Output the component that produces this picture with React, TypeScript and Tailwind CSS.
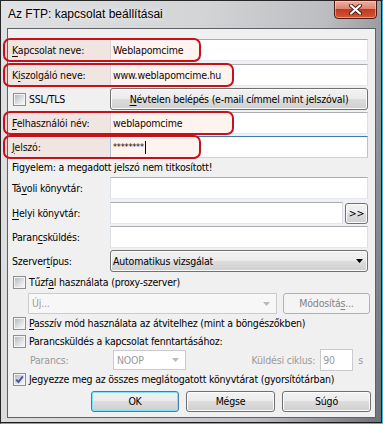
import React from "react";

const font = "font-['DejaVu_Sans_Condensed','DejaVu_Sans',sans-serif] [font-stretch:condensed] text-[10.5px] leading-[13px] tracking-[-0.2px] text-black";

function U({ children }: { children: React.ReactNode }) {
  return <span className="underline decoration-1 underline-offset-[2px]">{children}</span>;
}

function TextBox({ className = "", focused = false, disabled = false, children }: { className?: string; focused?: boolean; disabled?: boolean; children?: React.ReactNode }) {
  const border = focused
    ? "border-[#3d7bad] border-x-[#a4c9e3] border-b-[#b7d9ed]"
    : disabled
      ? "border-[#c9cbce] text-[#8d8d8d]"
      : "border-[#abadb3] border-x-[#dbdfe6] border-b-[#e3e9ef]";
  return <div className={`flex h-[22px] items-center border bg-white px-[2px] ${border} ${className}`}>{children}</div>;
}

function Btn({ className = "", def = false, disabled = false, children }: { className?: string; def?: boolean; disabled?: boolean; children?: React.ReactNode }) {
  const look = def
    ? "border-[#3c7fb1] shadow-[inset_0_0_0_1px_#7ee3fb] bg-[linear-gradient(#f2f2f2_0%,#ebebeb_50%,#dddddd_50%,#cfcfcf_100%)]"
    : disabled
      ? "border-[#adb2b5] bg-[#f4f4f4] text-[#838383]"
      : "border-[#707070] shadow-[inset_0_0_0_1px_#fcfcfc] bg-[linear-gradient(#f2f2f2_0%,#ebebeb_50%,#dddddd_50%,#cfcfcf_100%)]";
  return <div className={`flex items-center justify-center rounded-[3px] border ${look} ${className}`}>{children}</div>;
}

function Arrow({ color = "#000" }: { color?: string }) {
  return (
    <svg width="7" height="4" viewBox="0 0 7 4" className="shrink-0">
      <polygon points="0,0 7,0 3.5,4" fill={color} />
    </svg>
  );
}

function Check({ checked = false }: { checked?: boolean }) {
  return (
    <div className="relative flex h-[13px] w-[13px] shrink-0 items-center justify-center border border-[#8e8f8f] bg-[#f4f4f4]">
      <div className="h-[9px] w-[9px] bg-[linear-gradient(135deg,#b6babf_0%,#e7e8ea_70%,#f7f7f7_100%)]" />
      {checked && (
        <svg width="11" height="11" viewBox="0 0 11 11" className="absolute left-0 top-0">
          <path d="M2.2 5.6 L4.5 8 L8.8 2.4" fill="none" stroke="#3e5c9c" strokeWidth="2" />
        </svg>
      )}
    </div>
  );
}

function RedMark({ className }: { className: string }) {
  return <div className={`absolute h-[24px] rounded-[7px] border-[2.5px] border-[#c8101a] bg-[rgba(255,90,42,0.07)] ${className}`} />;
}

export default function App() {
  return (
    <div className={`relative flex h-[424px] w-[383px] flex-col border border-[#262626] border-r-[#36bfe9] border-b-[#36bfe9] shadow-[inset_-1px_-1px_0_#1c1c1c] bg-[linear-gradient(100deg,#e0e1e3_0%,#d3d4d6_45%,#bcbdc0_72%,#6f7275_100%)] ${font}`}>
      {/* title bar */}
      <div className="flex h-[27px] items-center pl-[7px]">
        <span className="font-['Liberation_Sans',sans-serif] text-[12px] tracking-normal text-black [text-shadow:0_0_6px_#ffffff]">Az FTP: kapcsolat beállításai</span>
      </div>
      <div className="absolute right-[5px] top-[-1px] flex h-[19px] w-[43px] items-center justify-center rounded-b-[4px] border border-[#4d1a12] bg-[linear-gradient(#eab0a2_0%,#de8470_45%,#c1391f_50%,#d25636_100%)] shadow-[inset_0_0_0_1px_rgba(255,220,210,0.5)]">
        <svg width="13" height="11" viewBox="0 0 13 11">
          <path d="M2 1.5 L11 9.5 M11 1.5 L2 9.5" stroke="#4a1a12" strokeWidth="4" strokeLinecap="round" />
          <path d="M2 1.5 L11 9.5 M11 1.5 L2 9.5" stroke="#ffffff" strokeWidth="2.2" strokeLinecap="round" />
        </svg>
      </div>

      {/* client */}
      <div className="mx-[6px] flex h-[390px] flex-col border border-[#5d6064] bg-[#f0f0f0]">
        <div className="mt-[10px] flex h-[22px] items-center pl-[4px] pr-[7px]">
          <div className="w-[98px]"><U>K</U>apcsolat neve:</div>
          <TextBox className="flex-1">Weblapomcime</TextBox>
        </div>
        <div className="mt-[3px] flex h-[22px] items-center pl-[4px] pr-[7px]">
          <div className="w-[98px]">K<U>i</U>szolgáló neve:</div>
          <TextBox className="flex-1">www.weblapomcime.hu</TextBox>
        </div>
        <div className="mt-[2px] flex h-[22px] items-center pl-[4px] pr-[7px]">
          <div className="flex w-[98px] items-center gap-[3px] pl-[1px]">
            <Check />
            <span>SSL/TLS</span>
          </div>
          <Btn className="h-[22px] flex-1"><U>N</U>évtelen belépés (e-mail címmel mint jelszóval)</Btn>
        </div>
        <div className="mt-[2px] flex h-[22px] items-center pl-[4px] pr-[7px]">
          <div className="w-[98px]"><U>F</U>elhasználói név:</div>
          <TextBox className="flex-1">weblapomcime</TextBox>
        </div>
        <div className="mt-[2px] flex h-[22px] items-center pl-[4px] pr-[7px]">
          <div className="w-[98px]"><U>J</U>elszó:</div>
          <TextBox focused className="flex-1">
            <span className="text-[9px] leading-[8px]">********</span>
            <span className="ml-[1px] h-[13px] w-[1px] bg-black" />
          </TextBox>
        </div>
        <div className="flex h-[18px] items-center pl-[4px]">Figyelem: a megadott jelszó nem titkosított!</div>
        <div className="mt-[1px] flex h-[22px] items-center pl-[4px] pr-[7px]">
          <div className="w-[98px]">Tá<U>v</U>oli könyvtár:</div>
          <TextBox className="flex-1" />
        </div>
        <div className="mt-[3px] flex h-[22px] items-center pl-[4px] pr-[7px]">
          <div className="w-[98px]"><U>H</U>elyi könyvtár:</div>
          <TextBox className="flex-1" />
          <Btn className="ml-[2px] mt-[1px] h-[21px] w-[23px]">&gt;&gt;</Btn>
        </div>
        <div className="mt-[2px] flex h-[22px] items-center pl-[4px] pr-[7px]">
          <div className="w-[98px]">Paran<U>c</U>sküldés:</div>
          <TextBox className="flex-1" />
        </div>
        <div className="mt-[2px] flex h-[22px] items-center pl-[4px] pr-[7px]">
          <div className="w-[98px]">Szerver<U>t</U>ípus:</div>
          <Btn className="h-[22px] flex-1 !justify-between pl-[2px] pr-[4px]">
            <span>Automatikus vizsgálat</span>
            <Arrow />
          </Btn>
        </div>
        <div className="mt-[3px] flex h-[15px] items-center gap-[3px] pl-[5px]">
          <Check />
          <span>Tűzf<U>a</U>l használata (proxy-szerver)</span>
        </div>
        <div className="mt-[3px] flex h-[21px] items-center gap-[6px] pl-[20px] pr-[5px]">
          <div className="flex h-[21px] w-[249px] items-center justify-between border border-[#c9cbce] bg-[#f7f7f7] pl-[3px] pr-[6px] text-[#9c9c9c]">
            <span>Új...</span>
            <Arrow color="#b9b9b9" />
          </div>
          <Btn disabled className="h-[21px] flex-1">Módosítá<U>s</U>...</Btn>
        </div>
        <div className="mt-[1px] flex h-[16px] items-center gap-[3px] pl-[5px]">
          <Check />
          <span><U>P</U>asszív mód használata az átvitelhez (mint a böngészőkben)</span>
        </div>
        <div className="mt-[1px] flex h-[18px] items-center gap-[3px] pl-[5px]">
          <Check />
          <span>Parancsküldés a kapcsolat fenntartásához:</span>
        </div>
        <div className="flex h-[20px] items-center pl-[22px] pr-[12px] text-[#9a9a9a]">
          <div className="w-[83px]">Parancs:</div>
          <div className="flex h-[20px] w-[73px] items-center justify-between border border-[#c9cbce] bg-white pl-[3px] pr-[6px]">
            <span>NOOP</span>
            <Arrow color="#b9b9b9" />
          </div>
          <div className="flex-1" />
          <span>Küldési ciklus:</span>
          <TextBox disabled className="ml-[5px] h-[20px] w-[33px] !text-[#9a9a9a]">90</TextBox>
          <span className="ml-[5px]">s</span>
        </div>
        <div className="flex h-[18px] items-center gap-[3px] pl-[5px]">
          <Check checked />
          <span>Jegyezze meg az összes meglátogatott könyvtárat (gyorsítótárban)</span>
        </div>
        <div className="mt-[3px] flex items-center justify-end gap-[7px] pr-[4px]">
          <Btn def className="h-[21px] w-[88px]">OK</Btn>
          <Btn className="h-[21px] w-[89px]">Mégse</Btn>
          <Btn className="h-[21px] w-[89px]">Súgó</Btn>
        </div>
      </div>

      {/* highlight marks */}
      <RedMark className="left-[2px] top-[37px] w-[198px]" />
      <RedMark className="left-[2px] top-[62px] w-[231px]" />
      <RedMark className="left-[2px] top-[110px] w-[231px]" />
      <RedMark className="left-[2px] top-[134px] w-[198px]" />
    </div>
  );
}
